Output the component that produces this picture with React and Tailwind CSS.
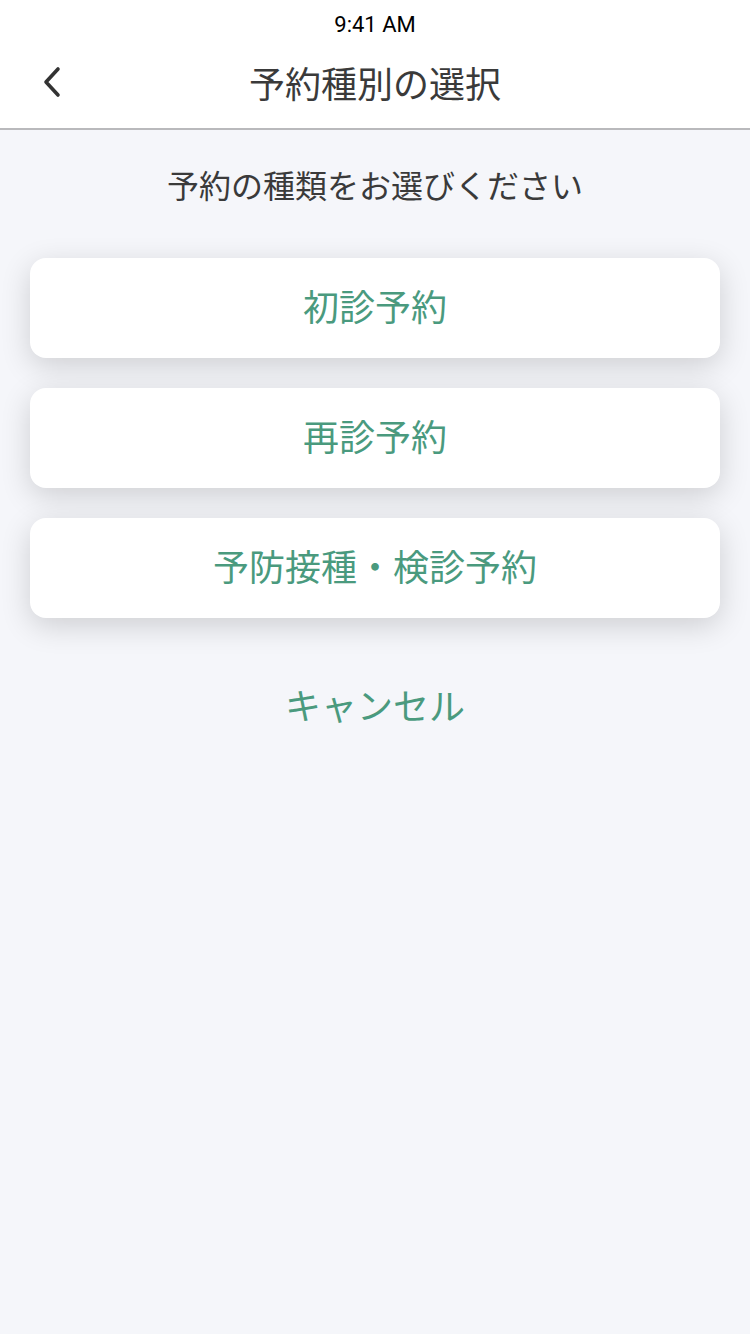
import React from 'react'

const options = ['初診予約', '再診予約', '予防接種・検診予約']

export default function App() {
  return (
    <div
      className="w-[750px] h-[1334px] bg-[#f5f6fa] flex flex-col"
      style={{ fontFamily: '"Noto Sans CJK JP", "Noto Sans", sans-serif' }}
    >
      <div className="bg-white border-b-2 border-[#b9b9bc]">
        <div className="h-[48px] flex items-center justify-center text-[22px] text-black" style={{ fontFamily: 'Roboto, sans-serif' }}>
          9:41 AM
        </div>
        <div className="relative h-[80px] pb-[12px] flex items-center justify-center">
          <button className="absolute left-[40px] top-[18px] w-[24px] h-[32px] flex items-center justify-center">
            <svg width="24" height="32" viewBox="0 0 24 32" fill="none" stroke="#333" strokeWidth="3.6" strokeLinecap="round" strokeLinejoin="round">
              <path d="M18 3 L6 16 L18 29" />
            </svg>
          </button>
          <h1 className="text-[36px] text-[#3a3a3a] leading-none">予約種別の選択</h1>
        </div>
      </div>

      <p className="mt-[38px] text-center text-[32px] text-[#3a3a3a] leading-none">予約の種類をお選びください</p>

      <div className="mt-[58px] px-[30px] flex flex-col gap-[30px]">
        {options.map(o => (
          <button
            key={o}
            className="h-[100px] pb-[6px] bg-white rounded-[16px] shadow-[0_8px_30px_rgba(0,0,0,0.16)] text-[36px] text-[#4a9a7e] flex items-center justify-center"
          >
            {o}
          </button>
        ))}
      </div>

      <button className="mt-[68px] self-center text-[36px] text-[#4a9a7e] leading-none">キャンセル</button>
    </div>
  )
}
